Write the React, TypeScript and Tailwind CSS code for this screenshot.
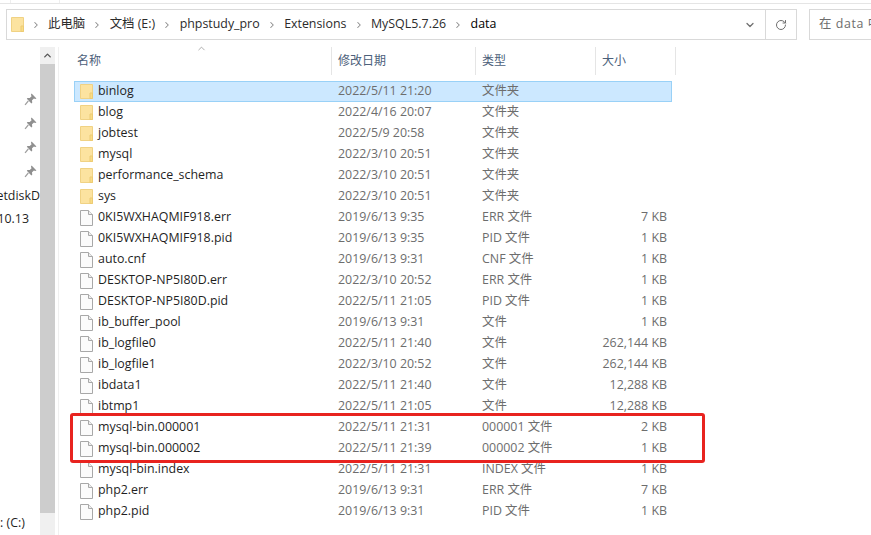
import React from 'react';
import { ChevronDown, ChevronRight, ChevronUp, RotateCw } from 'lucide-react';

interface FileRow {
  name: string;
  date: string;
  type: string;
  size?: string;
  folder?: boolean;
  selected?: boolean;
}

const rows: FileRow[] = [
  { name: 'binlog', date: '2022/5/11 21:20', type: '文件夹', folder: true, selected: true },
  { name: 'blog', date: '2022/4/16 20:07', type: '文件夹', folder: true },
  { name: 'jobtest', date: '2022/5/9 20:58', type: '文件夹', folder: true },
  { name: 'mysql', date: '2022/3/10 20:51', type: '文件夹', folder: true },
  { name: 'performance_schema', date: '2022/3/10 20:51', type: '文件夹', folder: true },
  { name: 'sys', date: '2022/3/10 20:51', type: '文件夹', folder: true },
  { name: '0KI5WXHAQMIF918.err', date: '2019/6/13 9:35', type: 'ERR 文件', size: '7 KB' },
  { name: '0KI5WXHAQMIF918.pid', date: '2019/6/13 9:35', type: 'PID 文件', size: '1 KB' },
  { name: 'auto.cnf', date: '2019/6/13 9:31', type: 'CNF 文件', size: '1 KB' },
  { name: 'DESKTOP-NP5I80D.err', date: '2022/3/10 20:52', type: 'ERR 文件', size: '1 KB' },
  { name: 'DESKTOP-NP5I80D.pid', date: '2022/5/11 21:05', type: 'PID 文件', size: '1 KB' },
  { name: 'ib_buffer_pool', date: '2019/6/13 9:31', type: '文件', size: '1 KB' },
  { name: 'ib_logfile0', date: '2022/5/11 21:40', type: '文件', size: '262,144 KB' },
  { name: 'ib_logfile1', date: '2022/3/10 20:52', type: '文件', size: '262,144 KB' },
  { name: 'ibdata1', date: '2022/5/11 21:40', type: '文件', size: '12,288 KB' },
  { name: 'ibtmp1', date: '2022/5/11 21:05', type: '文件', size: '12,288 KB' },
  { name: 'mysql-bin.000001', date: '2022/5/11 21:31', type: '000001 文件', size: '2 KB' },
  { name: 'mysql-bin.000002', date: '2022/5/11 21:39', type: '000002 文件', size: '1 KB' },
  { name: 'mysql-bin.index', date: '2022/5/11 21:31', type: 'INDEX 文件', size: '1 KB' },
  { name: 'php2.err', date: '2019/6/13 9:31', type: 'ERR 文件', size: '7 KB' },
  { name: 'php2.pid', date: '2019/6/13 9:31', type: 'PID 文件', size: '1 KB' },
];

const crumbs = ['此电脑', '文档 (E:)', 'phpstudy_pro', 'Extensions', 'MySQL5.7.26'];

function FolderIcon() {
  return (
    <svg width="13" height="15" viewBox="0 0 13 15" className="shrink-0">
      <path d="M0.5 0.5 H12.5 V14.5 H0.5 Z" fill="#fce3a0" stroke="#f0d284" />
      <path d="M10 9 H12.5 V14.5 H10 Z" fill="#f9dc85" stroke="#edcb74" />
    </svg>
  );
}

function FileIcon() {
  return (
    <svg width="13" height="16" viewBox="0 0 13 16" className="shrink-0">
      <path d="M0.5 0.5 H8.5 L12.5 4.5 V15.5 H0.5 Z" fill="#fbfbfb" stroke="#a8a8a8" />
      <path d="M8.5 0.5 V4.5 H12.5" fill="#eeeeee" stroke="#a8a8a8" />
    </svg>
  );
}

function PinIcon() {
  return (
    <svg width="13" height="13" viewBox="0 0 12 12">
      <path d="M7 0.5 L11.5 5 L10.3 5.6 L9.2 5 L7.4 6.8 L7.6 9 L6.8 9.6 L2.6 5.2 L3.2 4.5 L5.3 4.7 L7 3 L6.4 1.7 Z" fill="#8f8f8f" />
      <path d="M4 7.2 L1 11" stroke="#9f9f9f" strokeWidth="1.2" />
    </svg>
  );
}

function Row({ row }: { row: FileRow }) {
  return (
    <div
      className={`flex h-[21px] w-[598px] items-center border ${
        row.selected ? 'border-[#99d1f7] bg-[#cce8ff]' : 'border-transparent'
      }`}
    >
      <div className="flex w-[263px] shrink-0 items-center gap-[5px] pl-[5px] text-[#1f1f1f]">
        {row.folder ? <FolderIcon /> : <FileIcon />}
        <span>{row.name}</span>
      </div>
      <div className="w-[144px] shrink-0 text-[#6d6d6d]">{row.date}</div>
      <div className="w-[100px] shrink-0 text-[#6d6d6d]">{row.type}</div>
      <div className="w-[85px] shrink-0 text-right text-[#6d6d6d]">{row.size}</div>
    </div>
  );
}

export default function App() {
  return (
    <div
      className="relative h-[535px] w-[871px] overflow-hidden bg-white text-[12.4px] leading-none"
      style={{ fontFamily: '"Open Sans", "Noto Sans CJK SC", sans-serif' }}
    >
      {/* ribbon remnant */}
      <div className="flex h-[4px] border-b border-[#e5e5e5]">
        <div className="ml-[10px] w-[50px] border-x border-[#eeeeee]" />
      </div>

      {/* address bar */}
      <div className="mt-[5px] flex h-[31px] items-stretch pl-[6px]">
        <div className="flex w-[791px] shrink-0 items-center border border-[#d9d9d9]">
          <div className="ml-[4px]">
            <FolderIcon />
          </div>
          <div className="flex items-center text-[#2b2b2b]">
            <ChevronRight className="mx-[7px] h-[10px] w-[10px] text-[#8a8a8a]" strokeWidth={2.5} />
            {crumbs.map((c) => (
              <React.Fragment key={c}>
                <span>{c}</span>
                <ChevronRight className="mx-[7.25px] h-[10px] w-[10px] text-[#8a8a8a]" strokeWidth={2.5} />
              </React.Fragment>
            ))}
            <span className="text-black">data</span>
          </div>
          <div className="ml-auto flex h-full items-center">
            <ChevronDown className="mr-[9px] h-[12px] w-[12px] text-[#6f6f6f]" strokeWidth={2.5} />
            <div className="flex h-full w-[31px] items-center justify-center border-l border-[#d9d9d9]">
              <RotateCw className="h-[12px] w-[12px] text-[#6f6f6f]" />
            </div>
          </div>
        </div>
        <div className="ml-[12px] flex min-w-0 flex-1 items-center overflow-hidden border-y border-l border-[#d9d9d9] pl-[9px] tracking-[0.6px] whitespace-nowrap text-[#6d6d6d]">
          在 data 中
        </div>
      </div>

      {/* body */}
      <div className="mt-[7px] flex h-[488px]">
        {/* nav pane */}
        <div className="relative w-[40px] shrink-0 overflow-hidden">
          <div className="flex flex-col items-end gap-[11px] pt-[46px] pr-[3px]">
            <PinIcon />
            <PinIcon />
            <PinIcon />
            <PinIcon />
          </div>
          <div className="mt-[12px] flex justify-end whitespace-nowrap text-[#1f1f1f]">etdiskD</div>
          <div className="mt-[11px] flex justify-end pr-[11px] text-[#1f1f1f]">10.13</div>
          <div className="mt-[291px] text-[#1f1f1f]">: (C:)</div>
        </div>

        {/* scrollbar */}
        <div className="flex h-full w-[15px] shrink-0 flex-col bg-[#f0f0f0]">
          <div className="flex h-[17px] items-center justify-center">
            <ChevronUp className="h-[11px] w-[11px] text-[#555555]" strokeWidth={3} />
          </div>
          <div className="h-[449px] bg-[#cdcdcd]" />
        </div>
        <div className="ml-[3px] w-px shrink-0 bg-[#f0f0f0]" />

        {/* file list */}
        <div className="ml-[15px] flex flex-col">
          <div className="flex h-[28px] w-[602px] text-[12px] text-[#4c607a]">
            <div className="relative flex w-[258px] items-center border-r border-[#e5e5e5] pl-[3px]">
              名称
              <ChevronUp className="absolute top-[-4px] left-[120px] h-[11px] w-[15px] text-[#8a8a8a]" strokeWidth={1.5} />
            </div>
            <div className="flex w-[144px] items-center border-r border-[#e5e5e5] pl-[6px]">修改日期</div>
            <div className="flex w-[120px] items-center border-r border-[#e5e5e5] pl-[6px]">类型</div>
            <div className="flex w-[80px] items-center border-r border-[#e5e5e5] pl-[6px]">大小</div>
          </div>
          <div className="mt-[6px]">
            {rows.map((r) => (
              <Row key={r.name} row={r} />
            ))}
          </div>
        </div>
      </div>

      {/* red annotation */}
      <div className="absolute top-[413px] left-[70px] h-[50px] w-[635px] rounded-[3px] border-[3px] border-[#e8231f]" />
    </div>
  );
}
